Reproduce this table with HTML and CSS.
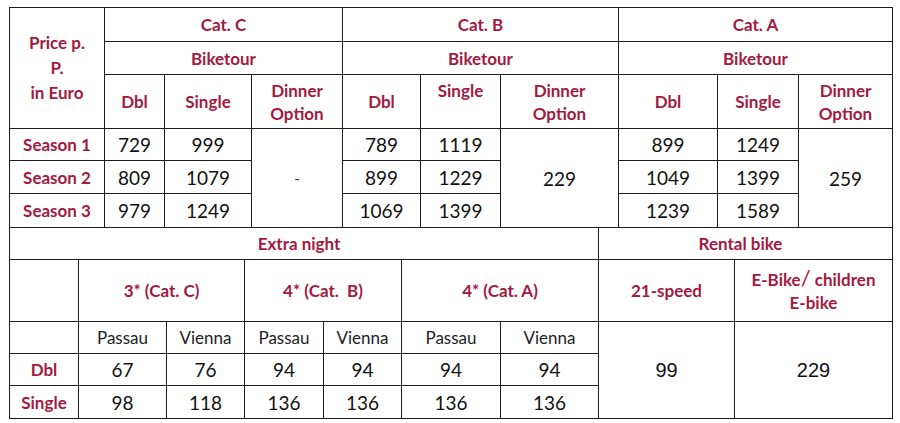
FILE: index.html
```html
<!DOCTYPE html>
<html lang="en">
<head>
<meta charset="utf-8">
<title>Price table</title>
<link rel="stylesheet" href="styles.css">
</head>
<body>
<div class="sheet">
  <div class="grid upper">
    <div class="c h price r3"><span>Price p.<br>P.<br>in Euro</span></div>
    <div class="c h s3">Cat. C</div>
    <div class="c h s3">Cat. B</div>
    <div class="c h s3">Cat. A</div>
    <div class="c h s3">Biketour</div>
    <div class="c h s3">Biketour</div>
    <div class="c h s3">Biketour</div>
    <div class="c h">Dbl</div>
    <div class="c h">Single</div>
    <div class="c h lh"><span>Dinner<br>Option</span></div>
    <div class="c h">Dbl</div>
    <div class="c h top">Single</div>
    <div class="c h lh"><span>Dinner<br>Option</span></div>
    <div class="c h">Dbl</div>
    <div class="c h">Single</div>
    <div class="c h lh"><span>Dinner<br>Option</span></div>

    <div class="c h">Season 1</div>
    <div class="c n">729</div>
    <div class="c n">999</div>
    <div class="c n dash r3">-</div>
    <div class="c n">789</div>
    <div class="c n">1119</div>
    <div class="c n r3">229</div>
    <div class="c n">899</div>
    <div class="c n">1249</div>
    <div class="c n r3">259</div>

    <div class="c h">Season 2</div>
    <div class="c n">809</div>
    <div class="c n">1079</div>
    <div class="c n">899</div>
    <div class="c n">1229</div>
    <div class="c n">1049</div>
    <div class="c n">1399</div>

    <div class="c h">Season 3</div>
    <div class="c n">979</div>
    <div class="c n">1249</div>
    <div class="c n">1069</div>
    <div class="c n">1399</div>
    <div class="c n">1239</div>
    <div class="c n">1589</div>
  </div>

  <div class="grid lower">
    <div class="c h s7 shift">Extra night</div>
    <div class="c h s2c shift-s">Rental bike</div>

    <div class="c"></div>
    <div class="c h s2c">3* (Cat. C)</div>
    <div class="c h s2c">4* (Cat.&nbsp; B)</div>
    <div class="c h s2c">4* (Cat. A)</div>
    <div class="c h">21-speed</div>
    <div class="c h lh"><span>E-Bike<span class="slash">/</span> children<br>E-bike</span></div>

    <div class="c"></div>
    <div class="c city">Passau</div>
    <div class="c city">Vienna</div>
    <div class="c city">Passau</div>
    <div class="c city">Vienna</div>
    <div class="c city">Passau</div>
    <div class="c city">Vienna</div>
    <div class="c a r3">99</div>
    <div class="c a r3">229</div>

    <div class="c h">Dbl</div>
    <div class="c n">67</div>
    <div class="c n">76</div>
    <div class="c n">94</div>
    <div class="c n">94</div>
    <div class="c n">94</div>
    <div class="c n">94</div>

    <div class="c h">Single</div>
    <div class="c n">98</div>
    <div class="c n">118</div>
    <div class="c n">136</div>
    <div class="c n">136</div>
    <div class="c n">136</div>
    <div class="c n">136</div>
  </div>
</div>
</body>
</html>
```

FILE: styles.css
```css
html, body {
  margin: 0;
  padding: 0;
  background: #ffffff;
}

body {
  padding: 7px 0 0 9px;
  font-family: Lato, "Liberation Sans", sans-serif;
  color: #111111;
}

.sheet {
  width: 884px;
}

.grid {
  display: grid;
  gap: 1px;
  background: #1c1c1c;
}

.upper {
  padding: 1px;
  grid-template-columns: 94px 59px 86px 90px 77px 79px 117px 98px 80px 93px;
  grid-template-rows: 33px 32px 53px 31px 32px 33px;
}

.lower {
  padding: 0 1px 1px 1px;
  grid-template-columns: 68px 87px 77px 78px 77px 98px 97px 135px 157px;
  grid-template-rows: 31px 61px 31px 31px 32px;
}

.c {
  background: #ffffff;
  display: flex;
  align-items: center;
  justify-content: center;
  text-align: center;
  white-space: nowrap;
}

.h {
  color: #a3193f;
  font-weight: 700;
  font-size: 17px;
  line-height: 23px;
}

.price {
  line-height: 25px;
  padding-bottom: 2px;
}

.lh {
  line-height: 23px;
}

.top {
  align-items: flex-start;
  padding-top: 4px;
}

.shift {
  padding-right: 10px;
}

.shift-s {
  padding-right: 10px;
}

.n {
  font-size: 19px;
  color: #111111;
}

.dash {
  font-size: 15px;
  color: #333333;
}

.city {
  font-size: 17px;
  color: #222222;
}

.a {
  font-family: "Liberation Sans", Arial, sans-serif;
  font-size: 20px;
  color: #111111;
}

.slash {
  font-size: 22px;
  font-weight: 400;
  line-height: 0;
}

.s3 { grid-column: span 3; }
.s2c { grid-column: span 2; }
.s7 { grid-column: span 7; }
.r3 { grid-row: span 3; }
```
